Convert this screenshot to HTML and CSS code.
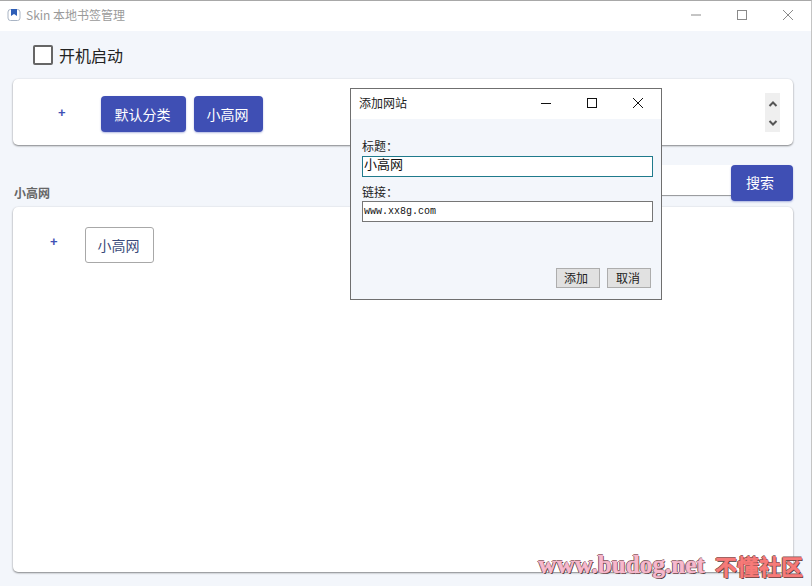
FILE: index.html
```html
<!DOCTYPE html>
<html lang="zh">
<head>
<meta charset="utf-8">
<title>Skin 本地书签管理</title>
<link rel="stylesheet" href="styles.css">
</head>
<body>
<div class="app">
  <header class="titlebar">
    <svg class="app-icon" width="14" height="14" viewBox="0 0 14 14"><rect x="1" y="1.5" width="12" height="11" rx="2.5" fill="#fff" stroke="#a9b4c4"/><path d="M4 1h6v7L7 6 4 8z" fill="#2f5fb8"/></svg>
    <span class="app-title">Skin 本地书签管理</span>
    <div class="win-controls main-controls">
      <svg width="12" height="12" viewBox="0 0 12 12"><path d="M1 6h10" stroke="#8a8a8a"/></svg>
      <svg width="12" height="12" viewBox="0 0 12 12"><rect x="1.5" y="1.5" width="9" height="9" fill="none" stroke="#8a8a8a"/></svg>
      <svg width="12" height="12" viewBox="0 0 12 12"><path d="M1 1l10 10M11 1L1 11" stroke="#8a8a8a"/></svg>
    </div>
  </header>

  <label class="startup"><span class="checkbox"></span>开机启动</label>

  <section class="card tabs-card">
    <span class="plus tabs-plus">+</span>
    <div class="tabs">
      <button class="tab tab-wide">默认分类</button>
      <button class="tab">小高网</button>
    </div>
    <div class="scroller">
      <svg width="10" height="8" viewBox="0 0 10 8"><path d="M1.500 6L5 2.500 8.500 6" fill="none" stroke="#555" stroke-width="2"/></svg>
      <svg width="10" height="8" viewBox="0 0 10 8"><path d="M1.500 2L5 5.500 8.500 2" fill="none" stroke="#555" stroke-width="2"/></svg>
    </div>
  </section>

  <div class="search-row">
    <h2 class="section-label">小高网</h2>
    <div class="search">
      <div class="search-input"></div>
      <button class="search-btn">搜索</button>
    </div>
  </div>

  <section class="card links-card">
    <span class="plus links-plus">+</span>
    <button class="link">小高网</button>
  </section>
</div>

<div class="dialog">
  <header class="dialog-bar">
    <span class="dialog-title">添加网站</span>
    <div class="win-controls dialog-controls">
      <svg width="12" height="12" viewBox="0 0 12 12"><path d="M1 6.500h10" stroke="#111"/></svg>
      <svg width="12" height="12" viewBox="0 0 12 12"><rect x="1.500" y="1.500" width="9" height="9" fill="none" stroke="#111"/></svg>
      <svg width="12" height="12" viewBox="0 0 12 12"><path d="M1 1l10 10M11 1L1 11" stroke="#111"/></svg>
    </div>
  </header>
  <div class="dialog-body">
    <label class="field-label first">标题：</label>
    <div class="field focused">小高网</div>
    <label class="field-label">链接：</label>
    <div class="field mono">www.xx8g.com</div>
    <div class="dialog-actions">
      <button class="win-btn add-btn">添加</button>
      <button class="win-btn">取消</button>
    </div>
  </div>
</div>

<div class="watermark"><span class="wm-url">www.budog.net</span><span class="wm-name">不懂社区</span></div>
</body>
</html>
```
FILE: styles.css
```css
* { box-sizing: border-box; }
html, body { margin: 0; height: 100%; overflow: hidden; }
body {
  font-family: "Noto Sans CJK SC", "Liberation Sans", sans-serif;
  background: #f3f6fb;
  color: #222;
  position: relative;
}
button { font-family: inherit; margin: 0; cursor: default; }
.app {
  height: 586px;
  display: flex;
  flex-direction: column;
  border-top: 1px solid #a8a8a8;
  border-right: 1px solid #c4c4c4;
}
.titlebar {
  height: 30px;
  flex: none;
  background: #fff;
  display: flex;
  align-items: center;
  padding: 0 0 3px 7px;
}
.app-title { margin-left: 5px; font-size: 12px; color: #9a9a9a; }
.win-controls { margin-left: auto; display: flex; align-items: center; }
.main-controls { gap: 34px; padding-right: 17px; }
.startup {
  height: 48px;
  flex: none;
  display: flex;
  align-items: center;
  padding-left: 33px;
  font-size: 16px;
  color: #222;
}
.checkbox {
  width: 20px;
  height: 20px;
  margin-right: 6px;
  border: 2px solid #666;
  border-radius: 2px;
  background: #fff;
}
.card {
  background: #fff;
  border-radius: 5px;
  margin: 0 18px 0 13px;
  box-shadow: 0 1px 2px rgba(0, 0, 0, .45), 0 0 2px rgba(0, 0, 0, .08);
}
.tabs-card {
  height: 66px;
  flex: none;
  display: flex;
  align-items: center;
  padding: 0 13px 0 45px;
}
.plus { color: #3f51b5; font-weight: 700; font-size: 13px; line-height: 1; font-family: "Liberation Sans", sans-serif; }
.tabs-plus { width: 43px; }
.tabs { display: flex; gap: 8px; margin-top: 3px; }
.tab {
  width: 69px;
  height: 36px;
  padding: 0 2px 0 0;
  border: 0;
  border-radius: 4px;
  background: #3f4fb4;
  color: #fff;
  font-size: 14px;
  box-shadow: 0 1px 2px rgba(63, 79, 180, .4);
}
.tab-wide { width: 85px; }
.scroller {
  margin-left: auto;
  width: 15px;
  height: 39px;
  background: #efefef;
  display: flex;
  flex-direction: column;
  align-items: center;
  justify-content: space-between;
  padding: 7px 0 5px;
}
.scroller svg { display: block; }
.search-row {
  height: 62px;
  flex: none;
  display: flex;
  align-items: flex-end;
  justify-content: space-between;
  margin: 0 18px 0 14px;
}
.section-label { margin: 0 0 6px; font-size: 12px; font-weight: 700; color: #666; }
.search { display: flex; align-items: flex-start; margin-bottom: 6px; }
.search-input {
  width: 250px;
  height: 30px;
  background: #fff;
  border-radius: 4px 0 0 4px;
  box-shadow: 0 1px 1px rgba(0, 0, 0, .4);
}
.search-btn {
  width: 62px;
  height: 36px;
  margin-left: -2px;
  padding: 0 4px 2px 0;
  border: 0;
  border-radius: 4px;
  background: #3f4fb4;
  color: #fff;
  font-size: 14px;
  box-shadow: 0 1px 2px rgba(63, 79, 180, .4);
}
.links-card {
  height: 365px;
  flex: none;
  display: flex;
  align-items: flex-start;
  padding: 20px 0 0 37px;
}
.links-plus { width: 35px; margin-top: 8px; }
.link {
  width: 69px;
  height: 36px;
  padding: 0 2px 0 0;
  border: 1px solid #a8a8a8;
  border-radius: 3px;
  background: #fff;
  color: #3a4a7a;
  font-size: 14px;
}
.dialog {
  position: absolute;
  left: 350px;
  top: 88px;
  width: 312px;
  height: 212px;
  border: 1px solid #6f6f6f;
  background: #f3f6fb;
  display: flex;
  flex-direction: column;
}
.dialog-bar {
  height: 30px;
  flex: none;
  background: #fff;
  display: flex;
  align-items: center;
  padding: 0 0 2px 8px;
}
.dialog-title { font-size: 12px; color: #222; margin-bottom: 2px; }
.dialog-controls { gap: 34px; padding-right: 17px; }
.dialog-body { flex: 1; display: flex; flex-direction: column; padding: 0 8px 0 11px; }
.field-label { font-size: 12px; line-height: 16px; color: #222; margin: 7px 0 1px; }
.field-label.first { margin: 19px 0 2px; }
.field {
  height: 21px;
  border: 1px solid #767676;
  background: #fff;
  padding-left: 1px;
  font-size: 13px;
  line-height: 14px;
  color: #111;
}
.field.focused { border-color: #1f7a8c; }
.field.mono { font-family: "Liberation Mono", monospace; font-size: 10px; line-height: 20px; }
.dialog-actions { display: flex; justify-content: flex-end; gap: 7px; margin-top: auto; padding: 0 2px 11px 0; }
.win-btn {
  width: 44px;
  height: 20px;
  padding: 0 2px 0 0;
  border: 1px solid #adadad;
  background: #e1e1e1;
  color: #222;
  font-size: 12px;
  line-height: 18px;
}
.add-btn { padding-right: 4px; }
.watermark {
  position: absolute;
  right: 9px;
  bottom: 8px;
  display: flex;
  gap: 10px;
  align-items: center;
  font-weight: 700;
  line-height: 26px;
  text-shadow: 1px 1px 0 #4a3a3a, -1px 0 0 #5a4040, 0 -1px 0 #7a5a5a;
}
.wm-url { font-family: "Liberation Serif", serif; font-size: 25px; letter-spacing: .1px; color: #f7b8cc; -webkit-text-stroke: .6px #f7b8cc; }
.wm-name { font-size: 22px; color: #f77a78; -webkit-text-stroke: .6px #f77a78; }
```
